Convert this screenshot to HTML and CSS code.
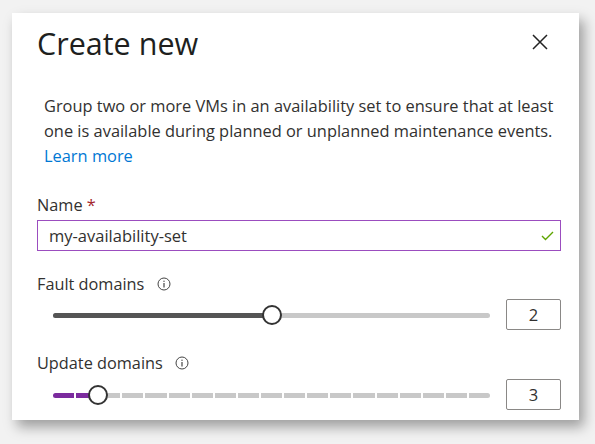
FILE: index.html
```html
<!DOCTYPE html>
<html lang="en">
<head>
<meta charset="utf-8">
<title>Create new</title>
<link rel="stylesheet" href="styles.css">
</head>
<body>
<div class="panel">
  <div class="header">
    <h1 class="title">Create new</h1>
    <button class="close" aria-label="Close">
      <svg width="16" height="16" viewBox="0 0 16 16"><path d="M1 1L15 15M15 1L1 15" stroke="#222" stroke-width="1.5" fill="none"/></svg>
    </button>
  </div>
  <p class="desc">Group two or more VMs in an availability set to ensure that at least one is available during planned or unplanned maintenance events.<br><a class="link" href="#">Learn more</a></p>

  <div class="field">
    <label class="label first">Name <span class="req">*</span></label>
    <div class="input">
      <span class="value">my-availability-set</span>
      <svg class="check" width="13" height="10" viewBox="0 0 13 10"><path d="M1 5L4.5 8.5L12 1" stroke="#5ea500" stroke-width="1.4" fill="none"/></svg>
    </div>
  </div>

  <div class="field">
    <div class="label">Fault domains <span class="info"><svg width="14" height="14" viewBox="0 0 14 14"><circle cx="7" cy="7" r="6" stroke="#444" stroke-width="1" fill="none"/><path d="M7 6V10.5" stroke="#444" stroke-width="1.2"/><circle cx="7" cy="4.2" r="0.7" fill="#444"/></svg></span></div>
    <div class="slider-row">
      <div class="slider">
        <div class="track"></div>
        <div class="fill" style="width:50%"></div>
        <div class="thumb" style="left:50%"></div>
      </div>
      <div class="numbox">2</div>
    </div>
  </div>

  <div class="field">
    <div class="label">Update domains <span class="info"><svg width="14" height="14" viewBox="0 0 14 14"><circle cx="7" cy="7" r="6" stroke="#444" stroke-width="1" fill="none"/><path d="M7 6V10.5" stroke="#444" stroke-width="1.2"/><circle cx="7" cy="4.2" r="0.7" fill="#444"/></svg></span></div>
    <div class="slider-row">
      <div class="slider">
        <div class="segments">
          <span class="seg on"></span><span class="seg on"></span><span class="seg"></span><span class="seg"></span><span class="seg"></span><span class="seg"></span><span class="seg"></span><span class="seg"></span><span class="seg"></span><span class="seg"></span><span class="seg"></span><span class="seg"></span><span class="seg"></span><span class="seg"></span><span class="seg"></span><span class="seg"></span><span class="seg"></span><span class="seg"></span><span class="seg"></span>
        </div>
        <div class="thumb" style="left:10.3%"></div>
      </div>
      <div class="numbox">3</div>
    </div>
  </div>
</div>
</body>
</html>
```

FILE: styles.css
```css
html, body {
  margin: 0;
  padding: 0;
}
body {
  background: #f2f2f2;
  font-family: "Open Sans", "Noto Sans", sans-serif;
  color: #323130;
  width: 595px;
  height: 444px;
  overflow: hidden;
}
.panel {
  box-sizing: border-box;
  margin: 13px 0 0 12px;
  width: 567px;
  height: 407px;
  background: #fff;
  box-shadow: 5px 7px 12px rgba(0,0,0,0.35);
  padding: 0 18px 0 25px;
}
.header {
  display: flex;
  justify-content: space-between;
  align-items: flex-start;
  height: 70px;
}
.title {
  margin: 0;
  padding-top: 12px;
  font-weight: 400;
  font-size: 30.5px;
  line-height: 36px;
  color: #201f1e;
}
.close {
  margin: 21px 13px 0 0;
  padding: 0;
  border: 0;
  background: none;
  width: 16px;
  height: 16px;
}
.close svg { display: block; }
.desc {
  margin: 0 0 0 7px;
  padding-top: 10px;
  font-size: 16.4px;
  line-height: 25px;
  color: #323130;
  width: 516px;
}
.link {
  color: #0078d4;
  text-decoration: none;
}
.label {
  display: block;
  font-size: 16.3px;
  line-height: 20px;
  color: #323130;
  padding-top: 23px;
  height: 20px;
}
.label.first { padding-top: 27px; }
.req { color: #a4262c; }
.info {
  display: inline-block;
  margin-left: 8px;
  vertical-align: -1px;
}
.info svg { display: block; }
.input {
  box-sizing: border-box;
  margin-top: 5px;
  width: 524px;
  height: 31px;
  border: 1.5px solid #9b4dbf;
  display: flex;
  align-items: center;
  justify-content: space-between;
  padding: 0 6px 0 11px;
  font-size: 16.5px;
  color: #323130;
}
.check { display: block; }
.slider-row {
  display: flex;
  align-items: center;
  margin-top: 5px;
  height: 31px;
}
.field:last-child .slider-row { margin-top: 6px; }
.slider {
  position: relative;
  width: 437px;
  height: 20px;
  margin: 0 16px 0 16px;
}
.track, .fill {
  position: absolute;
  top: 8px;
  left: 0;
  height: 5px;
  border-radius: 3px;
}
.track {
  width: 100%;
  background: #c8c8c8;
}
.fill {
  background: #555;
}
.thumb {
  position: absolute;
  top: 0;
  width: 20px;
  height: 20px;
  box-sizing: border-box;
  margin-left: -10px;
  border: 2px solid #333;
  border-radius: 50%;
  background: #fff;
}
.segments {
  position: absolute;
  top: 8px;
  left: 0;
  width: 100%;
  height: 5px;
  display: flex;
  gap: 2px;
}
.seg {
  flex: 1;
  background: #c8c8c8;
}
.seg:first-child { border-radius: 3px 0 0 3px; }
.seg:last-child { border-radius: 0 3px 3px 0; }
.seg.on { background: #7b2b9e; }
.numbox {
  box-sizing: border-box;
  width: 55px;
  height: 31px;
  border: 1px solid #8a8886;
  border-radius: 2px;
  display: flex;
  align-items: center;
  justify-content: center;
  font-size: 16.5px;
  color: #323130;
}
```
